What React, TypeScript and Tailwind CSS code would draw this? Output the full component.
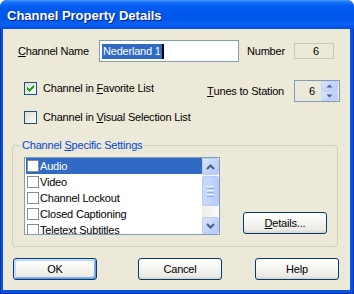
import React from "react";

function XPCheck({ checked }: { checked?: boolean }) {
  return (
    <div className="w-[13px] h-[13px] shrink-0 border border-[#1c5180] bg-[linear-gradient(135deg,#dcdbd4_0%,#efeee9_55%,#ffffff_100%)] relative">
      {checked && (
        <svg width="7" height="7" viewBox="0 0 7 7" className="absolute left-[2px] top-[2px]" shapeRendering="crispEdges">
          <g fill="#21a121">
            <rect x="6" y="0" width="1" height="1" />
            <rect x="5" y="1" width="2" height="1" />
            <rect x="0" y="2" width="1" height="1" />
            <rect x="4" y="2" width="3" height="1" />
            <rect x="0" y="3" width="2" height="1" />
            <rect x="3" y="3" width="3" height="1" />
            <rect x="0" y="4" width="5" height="1" />
            <rect x="1" y="5" width="3" height="1" />
            <rect x="2" y="6" width="1" height="1" />
          </g>
        </svg>
      )}
    </div>
  );
}

function ListCheck() {
  return <div className="w-[12px] h-[12px] shrink-0 border border-[#8c8c8c] bg-white mr-[1px]" />;
}

function ScrollBtn({ up }: { up?: boolean }) {
  return (
    <div className="w-[17px] h-[17px] rounded-[2px] border border-[#bccdf5] bg-[linear-gradient(135deg,#dce7fd_0%,#c3d4fb_50%,#b4c8f8_100%)] flex items-center justify-center">
      <svg width="9" height="6" viewBox="0 0 9 6">
        {up ? (
          <path d="M1 5 L4.5 1.5 L8 5" stroke="#4d6185" strokeWidth="2" fill="none" />
        ) : (
          <path d="M1 1 L4.5 4.5 L8 1" stroke="#4d6185" strokeWidth="2" fill="none" />
        )}
      </svg>
    </div>
  );
}

function SpinBtn({ up }: { up?: boolean }) {
  return (
    <div className="w-[17px] h-[10px] rounded-[2px] border border-[#c3d3f6] bg-[linear-gradient(135deg,#dde8fd_0%,#c5d6fb_50%,#b6caf8_100%)] flex items-center justify-center">
      <svg width="7" height="4" viewBox="0 0 7 4">
        {up ? <path d="M0.5 3.5 L3.5 0.5 L6.5 3.5 Z" fill="#4d6185" /> : <path d="M0.5 0.5 L3.5 3.5 L6.5 0.5 Z" fill="#4d6185" />}
      </svg>
    </div>
  );
}

function Btn({ children, def }: { children: React.ReactNode; def?: boolean }) {
  return (
    <div
      className={
        def
          ? "w-[84px] h-[22px] rounded-[3px] border border-[#003c74] bg-[linear-gradient(to_bottom,#ffffff_0%,#f5f5f1_45%,#ecebe6_85%,#d8d3c9_100%)] shadow-[inset_1px_1px_0_#cee7ff,inset_-1px_-1px_0_#6b9be0,inset_2px_2px_0_#bcd4f6,inset_-2px_-2px_0_#89ade4] flex items-center justify-center"
          : "w-[84px] h-[22px] rounded-[3px] border border-[#003c74] bg-[linear-gradient(to_bottom,#ffffff_0%,#f5f5f1_45%,#ecebe6_85%,#d8d3c9_100%)] flex items-center justify-center"
      }
    >
      {children}
    </div>
  );
}

export default function App() {
  const items = ["Audio", "Video", "Channel Lockout", "Closed Captioning", "Teletext Subtitles"];
  return (
    <div className="w-[354px] h-[294px] flex flex-col bg-white font-['Liberation_Sans',Arial,sans-serif] text-[11px] text-black leading-none">
      <div className="w-[354px] h-[294px] flex flex-col rounded-t-[7px] bg-[#0553e2] border-l border-r border-b border-[#0831a8]">
        {/* Title bar */}
        <div className="h-[29px] -mx-[1px] rounded-t-[7px] bg-[linear-gradient(to_bottom,#4a9aff_0%,#1773fa_8%,#0860f2_18%,#0058ee_35%,#0056eb_65%,#0a62f4_85%,#004bdc_100%)] flex items-center pl-[7px] pt-[1px]">
          <span className="text-white font-bold text-[13px] [text-shadow:1px_1px_0_#0a1d8c]">Channel Property Details</span>
        </div>
        {/* Body */}
        <div className="flex-1 ml-[2px] mr-[3px] mb-[3px] bg-[#ece9d8] flex flex-col tracking-[-0.2px]">
          {/* Row 1 */}
          <div className="flex items-center h-[22px] mt-[11px]">
            <span className="ml-[15px] w-[81px]">
              <u className="underline underline-offset-[1px]">C</u>hannel Name
            </span>
            <div className="w-[140px] h-[22px] border border-[#7f9db9] bg-white flex items-center pl-[2px]">
              <span className="bg-[#316ac5] text-white h-[15px] flex items-center pl-[1px] pr-[1px]">Nederland 1</span>
              <span className="w-[2px] h-[15px] bg-black" />
            </div>
            <span className="ml-[8px] w-[47px]">Number</span>
            <div className="w-[40px] h-[16px] border border-[#c9c7ba] flex items-center justify-center pl-[4px]">6</div>
          </div>
          {/* Row 2/3 */}
          <div className="flex mt-[18px]">
            <div className="flex-1 flex flex-col pt-[2px] pl-[21px] gap-[16px]">
              <div className="flex items-center h-[13px] gap-[6px]">
                <XPCheck checked />
                <span>
                  Channel in <u className="underline underline-offset-[1px]">F</u>avorite List
                </span>
              </div>
              <div className="flex items-center h-[13px] gap-[6px]">
                <XPCheck />
                <span>
                  Channel in <u className="underline underline-offset-[1px]">V</u>isual Selection List
                </span>
              </div>
            </div>
            <div className="flex items-start pr-[10px]">
              <span className="h-[22px] flex items-center mr-[10px]">
                <u className="underline underline-offset-[1px]">T</u>unes to Station
              </span>
              <div className="w-[46px] h-[22px] border border-[#7f9db9] bg-[#ece9d8] flex items-center">
                <span className="flex-1 text-right pr-[6px]">6</span>
                <div className="flex flex-col mr-[1px]">
                  <SpinBtn up />
                  <SpinBtn />
                </div>
              </div>
            </div>
          </div>
          {/* Group */}
          <div className="relative mt-[21px] ml-[9px] w-[326px] h-[102px] rounded-[3px] border border-[#d0d0bf] flex items-end justify-between pl-[11px] pr-[10px] pb-[11px]">
            <span className="absolute left-[7px] -top-[6px] px-[2px] bg-[#ece9d8] text-[#0046d5]">
              Channel <u className="underline underline-offset-[1px]">S</u>pecific Settings
            </span>
            <div className="w-[196px] h-[78px] border border-[#7f9db9] bg-white flex overflow-hidden">
              <div className="flex-1 flex flex-col pl-[1px] pt-[0px] overflow-hidden">
                {items.map((it, i) => (
                  <div
                    key={it}
                    className={
                      i === 0
                        ? "h-[16px] shrink-0 flex items-center pl-[1px] bg-[#316ac5] text-white"
                        : "h-[16px] shrink-0 flex items-center pl-[1px]"
                    }
                  >
                    <ListCheck />
                    <span>{it}</span>
                  </div>
                ))}
              </div>
              <div className="w-[17px] flex flex-col bg-[linear-gradient(to_right,#eeede5_0%,#fcfcfa_100%)]">
                <ScrollBtn up />
                <div className="h-[30px] mt-[1px] rounded-[2px] border border-[#b8cbf5] bg-[linear-gradient(to_right,#c9d8fc_0%,#c4d5fb_50%,#b8cbf9_100%)] flex flex-col items-center justify-center gap-[1px]">
                  <div className="w-[7px] h-[1px] bg-[#eef4fe]" />
                  <div className="w-[7px] h-[1px] bg-[#8cacf0]" />
                  <div className="w-[7px] h-[1px] bg-[#eef4fe]" />
                  <div className="w-[7px] h-[1px] bg-[#8cacf0]" />
                  <div className="w-[7px] h-[1px] bg-[#eef4fe]" />
                  <div className="w-[7px] h-[1px] bg-[#8cacf0]" />
                </div>
                <div className="flex-1" />
                <ScrollBtn />
              </div>
            </div>
            <div className="mb-[1px]">
              <Btn>
                <span>
                  <u className="underline underline-offset-[1px]">D</u>etails...
                </span>
              </Btn>
            </div>
          </div>
          {/* Buttons */}
          <div className="flex mt-[11px]">
            <div className="ml-[10px]">
              <Btn def>OK</Btn>
            </div>
            <div className="ml-[41px]">
              <Btn>Cancel</Btn>
            </div>
            <div className="ml-[33px]">
              <Btn>Help</Btn>
            </div>
          </div>
        </div>
      </div>
    </div>
  );
}
